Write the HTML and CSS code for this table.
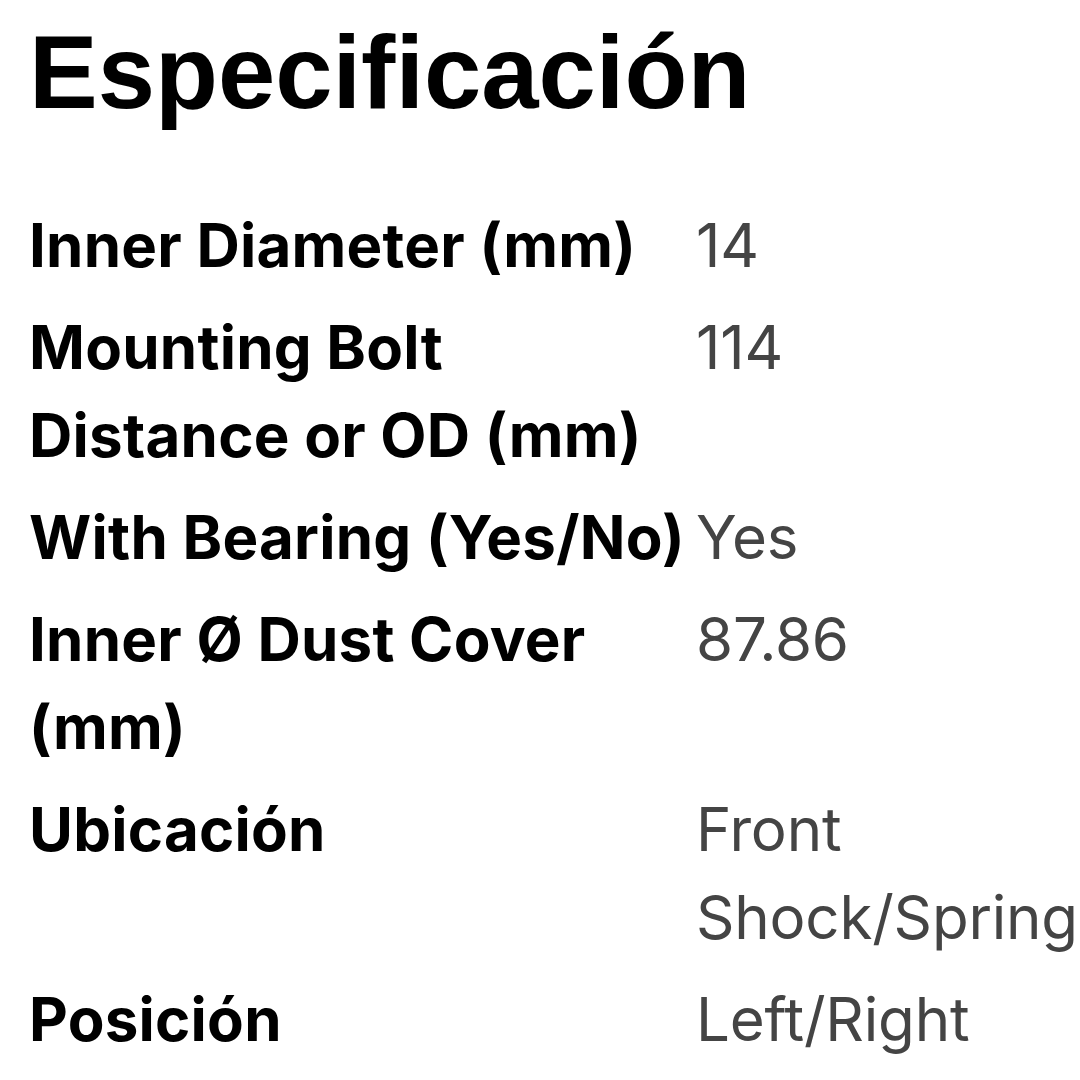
FILE: index.html
```html
<!DOCTYPE html>
<html lang="es">
<head>
<meta charset="utf-8">
<link rel="stylesheet" href="styles.css">
<title>Especificación</title>
</head>
<body>
<section class="spec">
  <h1 class="spec-title">Especificación</h1>
  <dl class="spec-table">
    <div class="spec-row"><dt>Inner Diameter (mm)</dt><dd>14</dd></div>
    <div class="spec-row"><dt>Mounting Bolt Distance or OD (mm)</dt><dd>114</dd></div>
    <div class="spec-row"><dt>With Bearing (Yes/No)</dt><dd>Yes</dd></div>
    <div class="spec-row"><dt>Inner Ø Dust Cover (mm)</dt><dd>87.86</dd></div>
    <div class="spec-row"><dt>Ubicación</dt><dd>Front Shock/Spring</dd></div>
    <div class="spec-row"><dt>Posición</dt><dd>Left/Right</dd></div>
  </dl>
</section>
</body>
</html>
```
FILE: styles.css
```css
html, body {
  margin: 0;
  padding: 0;
  background: #ffffff;
}
body {
  width: 1080px;
  height: 1080px;
  overflow: hidden;
}
.spec {
  padding: 12px 0 0 29px;
}
.spec-title {
  margin: 0;
  font-family: "Liberation Sans", Arial, sans-serif;
  font-weight: 700;
  font-size: 103px;
  line-height: 122px;
  color: #000;
}
.spec-table {
  margin: 60px 0 0 0;
}
.spec-row {
  display: grid;
  grid-template-columns: 667px 1fr;
  padding: 7px 0;
}
.spec-row dt {
  margin: 0;
  font-family: Inter, "Noto Sans", sans-serif;
  font-weight: 700;
  font-size: 60px;
  line-height: 88px;
  letter-spacing: 0.25px;
  color: #000;
}
.spec-row dd {
  margin: 0;
  font-family: Inter, "Noto Sans", sans-serif;
  font-weight: 400;
  font-size: 60px;
  line-height: 88px;
  letter-spacing: -0.2px;
  color: #444;
}
```
